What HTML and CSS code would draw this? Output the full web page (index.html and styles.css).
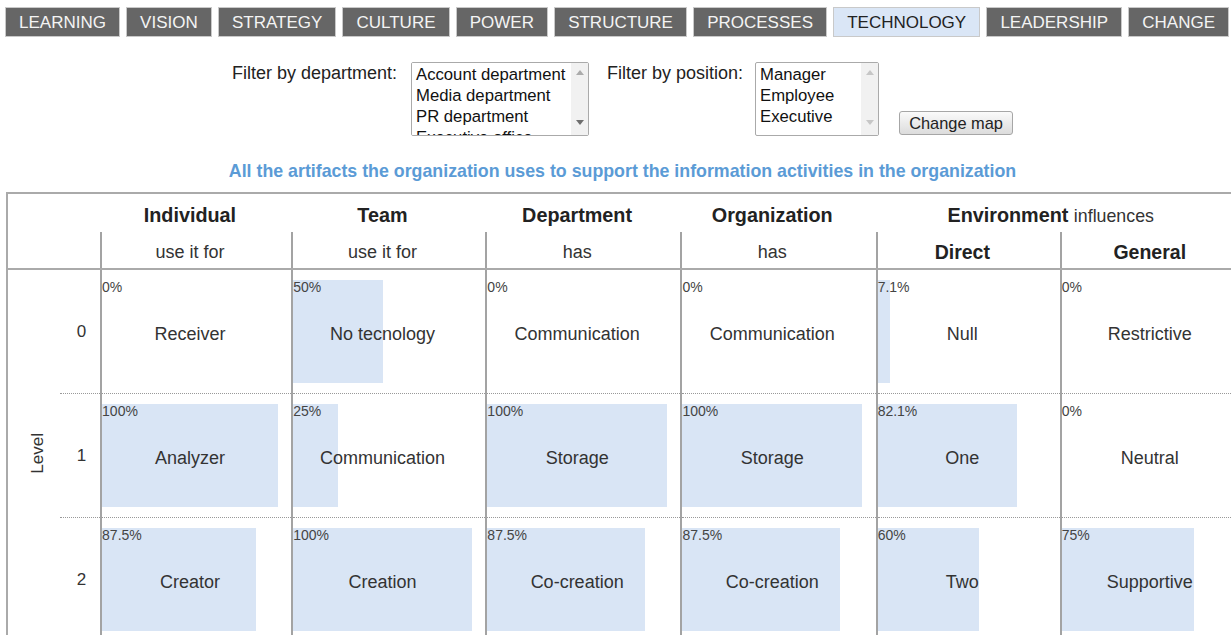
FILE: index.html
```
<!DOCTYPE html>
<html lang="en">
<head>
    <meta charset="utf-8" />
    <title>Organization map - Technology</title>
    <link rel="stylesheet" href="styles.css">
</head>
<body>
    <div class="page">
        <nav class="tabs">
            <a class="tab" href="#">LEARNING</a>
            <a class="tab" href="#">VISION</a>
            <a class="tab" href="#">STRATEGY</a>
            <a class="tab" href="#">CULTURE</a>
            <a class="tab" href="#">POWER</a>
            <a class="tab" href="#">STRUCTURE</a>
            <a class="tab" href="#">PROCESSES</a>
            <a class="tab active" href="#">TECHNOLOGY</a>
            <a class="tab" href="#">LEADERSHIP</a>
            <a class="tab" href="#">CHANGE</a>
        </nav>

        <form class="filters" action="#">
            <label class="filterLabel labelDept" for="department">Filter by department:</label>
            <span class="listWrap wrapDept">
                <select class="filterList listDept" id="department" multiple>
                    <option>Account department</option>
                    <option>Media department</option>
                    <option>PR department</option>
                    <option>Executive office</option>
                    <option>IT department</option>
                </select>
                <span class="scrollbar"><span class="arrowUp"></span><span class="arrowDown"></span></span>
            </span>
            <label class="filterLabel labelPos" for="position">Filter by position:</label>
            <span class="listWrap wrapPos">
                <select class="filterList listPos" id="position" multiple>
                    <option>Manager</option>
                    <option>Employee</option>
                    <option>Executive</option>
                </select>
                <span class="scrollbar idle"><span class="arrowUp"></span><span class="arrowDown"></span></span>
            </span>
            <button type="submit" class="changeButton">Change map</button>
        </form>

        <h2 class="mapTitle">All the artifacts the organization uses to support the information activities in the organization</h2>

        <div class="mapWrap">
            <table class="map">
                <colgroup>
                    <col class="colLevel">
                    <col class="colNum">
                    <col class="colInd">
                    <col class="colTeam">
                    <col class="colDept">
                    <col class="colOrg">
                    <col class="colDirect">
                    <col class="colGeneral">
                </colgroup>
                <thead>
                    <tr class="headTop">
                        <th colspan="2" rowspan="2" class="corner"></th>
                        <th><span class="padR">Individual</span></th>
                        <th><span class="padR">Team</span></th>
                        <th><span class="padR">Department</span></th>
                        <th><span class="padR">Organization</span></th>
                        <th colspan="2"><span class="padR">Environment <span class="light">influences</span></span></th>
                    </tr>
                    <tr class="headSub">
                        <th class="sub"><span class="padR">use it for</span></th>
                        <th class="sub"><span class="padR">use it for</span></th>
                        <th class="sub"><span class="padR">has</span></th>
                        <th class="sub"><span class="padR">has</span></th>
                        <th class="sub strong"><span class="padR">Direct</span></th>
                        <th class="sub strong"><span class="padR">General</span></th>
                    </tr>
                </thead>
                <tbody>
                    <tr>
                        <th rowspan="3" class="levelHead"><span class="levelText">Level</span></th>
                        <td class="num">0</td>
                        <td class="cell"><div class="box"><div class="bar" style="width:0%"></div><span class="pct">0%</span><span class="label">Receiver</span></div></td>
                        <td class="cell"><div class="box"><div class="bar" style="width:50%"></div><span class="pct">50%</span><span class="label">No tecnology</span></div></td>
                        <td class="cell"><div class="box"><div class="bar" style="width:0%"></div><span class="pct">0%</span><span class="label">Communication</span></div></td>
                        <td class="cell"><div class="box"><div class="bar" style="width:0%"></div><span class="pct">0%</span><span class="label">Communication</span></div></td>
                        <td class="cell"><div class="box"><div class="bar" style="width:7.1%"></div><span class="pct">7.1%</span><span class="label">Null</span></div></td>
                        <td class="cell"><div class="box"><div class="bar" style="width:0%"></div><span class="pct">0%</span><span class="label">Restrictive</span></div></td>
                    </tr>
                    <tr>
                        <td class="num">1</td>
                        <td class="cell"><div class="box"><div class="bar" style="width:100%"></div><span class="pct">100%</span><span class="label">Analyzer</span></div></td>
                        <td class="cell"><div class="box"><div class="bar" style="width:25%"></div><span class="pct">25%</span><span class="label">Communication</span></div></td>
                        <td class="cell"><div class="box"><div class="bar" style="width:100%"></div><span class="pct">100%</span><span class="label">Storage</span></div></td>
                        <td class="cell"><div class="box"><div class="bar" style="width:100%"></div><span class="pct">100%</span><span class="label">Storage</span></div></td>
                        <td class="cell"><div class="box"><div class="bar" style="width:82.1%"></div><span class="pct">82.1%</span><span class="label">One</span></div></td>
                        <td class="cell"><div class="box"><div class="bar" style="width:0%"></div><span class="pct">0%</span><span class="label">Neutral</span></div></td>
                    </tr>
                    <tr>
                        <td class="num">2</td>
                        <td class="cell"><div class="box"><div class="bar" style="width:87.5%"></div><span class="pct">87.5%</span><span class="label">Creator</span></div></td>
                        <td class="cell"><div class="box"><div class="bar" style="width:100%"></div><span class="pct">100%</span><span class="label">Creation</span></div></td>
                        <td class="cell"><div class="box"><div class="bar" style="width:87.5%"></div><span class="pct">87.5%</span><span class="label">Co-creation</span></div></td>
                        <td class="cell"><div class="box"><div class="bar" style="width:87.5%"></div><span class="pct">87.5%</span><span class="label">Co-creation</span></div></td>
                        <td class="cell"><div class="box"><div class="bar" style="width:60%"></div><span class="pct">60%</span><span class="label">Two</span></div></td>
                        <td class="cell"><div class="box"><div class="bar" style="width:75%"></div><span class="pct">75%</span><span class="label">Supportive</span></div></td>
                    </tr>
                </tbody>
            </table>
        </div>
    </div>
</body>
</html>
```

FILE: styles.css
```
html, body {
    margin: 0px;
    padding: 0px;
    overflow: hidden;
}

body {
    background-color: white;
    font-family: "Liberation Sans", Arial, sans-serif;
    color: #333;
}

.page {
    width: 1245px;
}

/* Top navigation */
.tabs {
    display: flex;
    gap: 6.2px;
    margin: 7px 0px 0px 5px;
}

.tab {
    display: block;
    height: 28px;
    line-height: 29px;
    padding: 0px 13px;
    border: 1px solid #c9c9c9;
    background-color: #666;
    color: #f4f4f4;
    font-size: 17px;
    text-decoration: none;
    white-space: nowrap;
}

    .tab.active {
        background-color: #dae6f6;
        color: #222;
    }

/* Filters */
.filters {
    display: flex;
    justify-content: center;
    align-items: flex-start;
    margin-top: 25px;
    font-size: 18px;
    color: #222;
}

.filterLabel {
    margin-top: 1px;
    line-height: 20px;
}

.labelDept {
    margin-right: 14px;
}

.labelPos {
    margin-right: 12px;
}

.listWrap {
    position: relative;
    display: block;
    height: 74px;
}

.wrapDept {
    margin-right: 18px;
}

.wrapPos {
    margin-right: 20px;
}

.filterList {
    display: block;
    height: 74px;
    padding: 2px 2px 0px 2px;
    border: 1px solid #aaa;
    background-color: white;
    font-family: "Liberation Sans", Arial, sans-serif;
    font-size: 16.7px;
    color: #111;
    outline: none;
}

    .filterList option {
        padding: 0px 2px 1px 2px;
    }

.listDept {
    width: 178px;
}

.listPos {
    width: 124px;
}

/* drawn scrollbar over the list boxes */
.scrollbar {
    position: absolute;
    top: 1px;
    right: 1px;
    bottom: 1px;
    width: 17px;
    background-color: #f1f1f1;
    display: flex;
    flex-direction: column;
    justify-content: space-between;
    pointer-events: none;
}

.arrowUp,
.arrowDown {
    display: block;
    width: 0px;
    height: 0px;
    margin: 0px auto;
    border-left: 4px solid transparent;
    border-right: 4px solid transparent;
}

.arrowUp {
    margin-top: 7px;
    border-bottom: 5px solid #ababab;
}

.arrowDown {
    margin-bottom: 10px;
    border-top: 5px solid #6e6e6e;
}

.idle .arrowUp {
    border-bottom-color: #c6c6c6;
}

.idle .arrowDown {
    border-top-color: #c6c6c6;
}

.changeButton {
    align-self: flex-end;
    height: 24px;
    width: 114px;
    margin-bottom: 1px;
    padding: 0px;
    border: 1px solid #a6a6a6;
    border-radius: 3px;
    background: linear-gradient(#fafafa, #dcdcdc);
    font-family: "Liberation Sans", Arial, sans-serif;
    font-size: 16.4px;
    color: #222;
}

.mapTitle {
    margin: 25px 0px 11px 0px;
    text-align: center;
    font-size: 17.8px;
    line-height: 20px;
    font-weight: bold;
    color: #5b9bd6;
}

/* The map table */
.mapWrap {
    padding-left: 6px;
}

.map {
    border-collapse: collapse;
    table-layout: fixed;
    width: 1245px;
    border-top: 2px solid #aaa;
    border-left: 2px solid #aaa;
    color: #333;
}

.colLevel { width: 53px; }
.colNum { width: 41px; }
.colInd { width: 191px; }
.colTeam { width: 194px; }
.colDept { width: 195px; }
.colOrg { width: 195px; }
.colDirect { width: 184px; }
.colGeneral { width: 190px; }

.map th {
    padding: 0px;
    text-align: center;
    color: #222;
}

.headTop th {
    height: 34px;
    padding-top: 4px;
    font-size: 19.8px;
    font-weight: bold;
    vertical-align: middle;
}

.headTop .light {
    font-weight: normal;
    font-size: 17.8px;
    color: #333;
}

.headSub th {
    height: 32px;
    padding-top: 4px;
    border-bottom: 2px solid #aaa;
}

.headSub .sub {
    border-left: 2px solid #a3a3a3;
    font-size: 18px;
    font-weight: normal;
    color: #333;
}

.headSub .strong {
    font-size: 19.5px;
    font-weight: bold;
    color: #222;
}

.padR {
    display: block;
    width: 93%;
}

.corner {
    border-bottom: 2px solid #aaa;
}

.levelHead {
    vertical-align: middle;
}

.levelText {
    display: inline-block;
    writing-mode: vertical-rl;
    transform: rotate(180deg);
    font-size: 17px;
    font-weight: normal;
    color: #333;
    margin-left: 8px;
}

.map td {
    padding: 0px;
    border-bottom: 1px dotted #999;
}

.num {
    text-align: center;
    font-size: 17px;
    vertical-align: middle;
    padding-left: 3px !important;
}

.cell {
    border-left: 2px solid #a3a3a3;
    padding: 10px 0px 10px 0px !important;
}

.box {
    position: relative;
    width: 93%;
    height: 103px;
    display: flex;
    align-items: center;
    justify-content: center;
}

.bar {
    position: absolute;
    left: 0px;
    top: 0px;
    bottom: 0px;
    background-color: #d9e5f5;
}

.pct {
    position: absolute;
    left: 0px;
    top: -1px;
    font-size: 14px;
    line-height: 16px;
    color: #444;
}

.label {
    position: relative;
    font-size: 18px;
    margin-top: 5px;
    color: #333;
}
```
